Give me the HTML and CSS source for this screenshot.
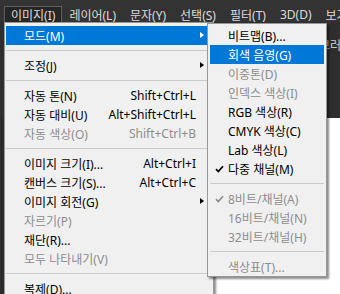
FILE: index.html
```html
<!DOCTYPE html>
<html lang="ko">
<head>
    <meta charset="UTF-8">
    <meta name="viewport" content="width=device-width, initial-scale=1.0">
    <title>이미지 메뉴</title>
    <link rel="stylesheet" href="styles.css">
</head>
<body>
    <!-- Barre de menu -->
    <div class="menubar">
        <span class="bar-item active">이미지(I)</span>
        <span class="bar-item">레이어(L)</span>
        <span class="bar-item">문자(Y)</span>
        <span class="bar-item">선택(S)</span>
        <span class="bar-item">필터(T)</span>
        <span class="bar-item">3D(D)</span>
        <span class="bar-item">보기(V)</span>
    </div>

    <!-- Espace de travail derrière les menus -->
    <div class="workspace">
        <div class="panel">
            <div class="panel-tab">브러시</div>
        </div>
        <div class="document"></div>
    </div>

    <!-- Menu principal -->
    <div class="menu main-menu">
        <div class="item selected"><span class="label">모드(M)</span><span class="arrow"></span></div>
        <div class="sep"></div>
        <div class="item"><span class="label">조정(J)</span><span class="arrow"></span></div>
        <div class="sep"></div>
        <div class="item"><span class="label">자동 톤(N)</span><span class="key">Shift+Ctrl+L</span></div>
        <div class="item"><span class="label">자동 대비(U)</span><span class="key">Alt+Shift+Ctrl+L</span></div>
        <div class="item disabled"><span class="label">자동 색상(O)</span><span class="key">Shift+Ctrl+B</span></div>
        <div class="sep"></div>
        <div class="item"><span class="label">이미지 크기(I)...</span><span class="key">Alt+Ctrl+I</span></div>
        <div class="item"><span class="label">캔버스 크기(S)...</span><span class="key">Alt+Ctrl+C</span></div>
        <div class="item"><span class="label">이미지 회전(G)</span><span class="arrow"></span></div>
        <div class="item disabled"><span class="label">자르기(P)</span></div>
        <div class="item"><span class="label">재단(R)...</span></div>
        <div class="item disabled"><span class="label">모두 나타내기(V)</span></div>
        <div class="sep"></div>
        <div class="item"><span class="label">복제(D)...</span></div>
    </div>

    <!-- Sous-menu Mode -->
    <div class="menu sub-menu">
        <div class="item"><span class="label">비트맵(B)...</span></div>
        <div class="item selected"><span class="label">회색 음영(G)</span></div>
        <div class="item disabled"><span class="label">이중톤(D)</span></div>
        <div class="item disabled"><span class="label">인덱스 색상(I)</span></div>
        <div class="item"><span class="label">RGB 색상(R)</span></div>
        <div class="item"><span class="label">CMYK 색상(C)</span></div>
        <div class="item"><span class="label">Lab 색상(L)</span></div>
        <div class="item">
            <svg class="check" width="9" height="8" viewBox="0 0 9 8"><path d="M1 4.2 L3.3 6.6 L8 1.2" fill="none" stroke="currentColor" stroke-width="1.7"/></svg>
            <span class="label">다중 채널(M)</span>
        </div>
        <div class="sep"></div>
        <div class="item disabled">
            <svg class="check" width="9" height="8" viewBox="0 0 9 8"><path d="M1 4.2 L3.3 6.6 L8 1.2" fill="none" stroke="currentColor" stroke-width="1.7"/></svg>
            <span class="label">8비트/채널(A)</span>
        </div>
        <div class="item disabled"><span class="label">16비트/채널(N)</span></div>
        <div class="item disabled"><span class="label">32비트/채널(H)</span></div>
        <div class="sep"></div>
        <div class="item disabled"><span class="label">색상표(T)...</span></div>
    </div>
</body>
</html>
```

FILE: styles.css
```css
body {
    margin: 0;
    width: 340px;
    height: 294px;
    overflow: hidden;
    background-color: #2b2b2b;
    font-family: "Noto Sans", "Noto Sans CJK KR", sans-serif;
    font-size: 12px;
}

/* Barre de menu */
.menubar {
    display: flex;
    align-items: flex-end;
    height: 22px;
    background-color: #333333;
    padding-left: 4px;
    white-space: nowrap;
}

.bar-item {
    display: flex;
    align-items: center;
    height: 15px;
    padding: 0 6px;
    color: #dcdcdc;
    border: 1px solid transparent;
    border-bottom: none;
}

.bar-item.active {
    background-color: #262626;
    border-color: #5e5e5e;
}

/* Espace de travail */
.workspace {
    display: flex;
    flex-direction: column;
    height: 272px;
}

.panel {
    height: 96px;
    background-color: #2e2e2e;
    padding-left: 319px;
}

.panel-tab {
    margin-top: 14px;
    color: #d0d0d0;
    white-space: nowrap;
}

.document {
    flex: 1;
    background-color: #ffffff;
    margin-left: 212px;
}

/* Menus */
.menu {
    position: absolute;
    box-sizing: border-box;
    background-color: #f0f0f0;
    border: 1px solid #979797;
    box-shadow: 2px 2px 2px rgba(0, 0, 0, 0.45);
}

.main-menu {
    left: 4px;
    top: 22px;
    width: 210px;
    height: 290px;
    padding: 3px 1px;
}

.sub-menu {
    left: 207px;
    top: 23px;
    width: 120px;
    padding: 2px 2px 0 2px;
}

.item {
    position: relative;
    display: flex;
    align-items: center;
    height: 19px;
    padding: 0 16px 0 18px;
    color: #000000;
    white-space: nowrap;
}

.item.selected {
    background-color: #0078d7;
    color: #ffffff;
}

.item.disabled {
    color: #8d8d8d;
}

.label {
    flex: 1;
}

.key {
    text-align: right;
}

.arrow {
    position: absolute;
    right: 8px;
    top: 6px;
    width: 0;
    height: 0;
    border-top: 3.5px solid transparent;
    border-bottom: 3.5px solid transparent;
    border-left: 4px solid currentColor;
}

.check {
    position: absolute;
    left: 5px;
    top: 6px;
}

.sep {
    height: 1px;
    margin: 5px 0;
    background-color: #cacaca;
}
```
